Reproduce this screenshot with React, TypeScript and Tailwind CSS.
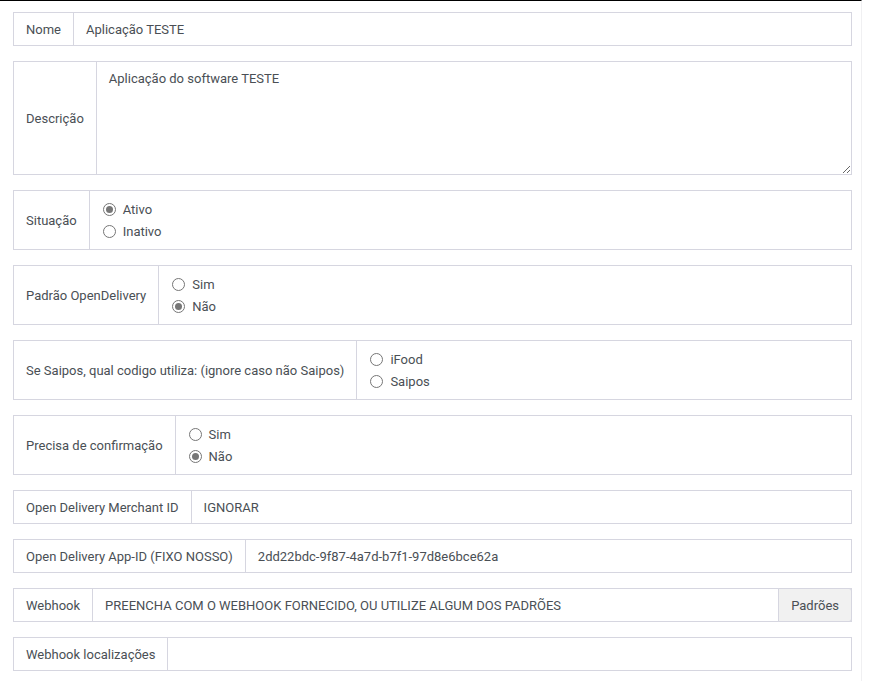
import React from "react";

const font = { fontFamily: '"Roboto", "Liberation Sans", sans-serif' };

function Radio({ checked, label }: { checked?: boolean; label: string }) {
  return (
    <label className="flex items-center gap-[7px] h-[22px]">
      <span className="w-[13px] h-[13px] rounded-full border border-[#767676] bg-white flex items-center justify-center">
        {checked && <span className="w-[7px] h-[7px] rounded-full bg-[#767676]" />}
      </span>
      <span>{label}</span>
    </label>
  );
}

function TextRow({ label, value, button }: { label: string; value?: string; button?: string }) {
  return (
    <div className="flex h-[34px] border border-[#d6d6e0] bg-white">
      <div className="flex items-center px-3 pt-px border-r border-[#d6d6e0] whitespace-nowrap">{label}</div>
      <div className="flex-1 flex items-center px-3 pt-px whitespace-nowrap overflow-hidden">{value}</div>
      {button && (
        <div className="flex items-center px-3 pt-px -my-px -mr-px h-[34px] border border-[#d6d6e0] bg-[#f1f1f1] rounded-r-[3px]">{button}</div>
      )}
    </div>
  );
}

function RadioRow({ label, options, checked }: { label: string; options: string[]; checked: number }) {
  return (
    <div className="flex h-[60px] border border-[#d6d6e0] bg-white">
      <div className="flex items-center px-3 pt-px border-r border-[#d6d6e0] whitespace-nowrap">{label}</div>
      <div className="flex-1 flex flex-col justify-center pl-[13px] pt-px">
        {options.map((o, i) => (
          <Radio key={o} label={o} checked={i === checked} />
        ))}
      </div>
    </div>
  );
}

export default function App() {
  return (
    <div style={font} className="w-[869px] h-[681px] bg-white text-[13px] text-[#4a4f55] overflow-hidden">
      <div className="w-[862px] h-full border-t border-black border-r border-r-[#f0f0f2]">
        <div className="pl-[13px] pr-[9px] pt-[11px] flex flex-col gap-[15px]">
          <TextRow label="Nome" value="Aplicação TESTE" />
          <div className="flex h-[114px] border border-[#d6d6e0] bg-white">
            <div className="flex items-center px-3 pt-px border-r border-[#d6d6e0] whitespace-nowrap">Descrição</div>
            <textarea
              className="flex-1 px-3 pt-[7px] outline-none resize-y text-[#4a4f55]"
              style={font}
              defaultValue="Aplicação do software TESTE"
            />
          </div>
          <RadioRow label="Situação" options={["Ativo", "Inativo"]} checked={0} />
          <RadioRow label="Padrão OpenDelivery" options={["Sim", "Não"]} checked={1} />
          <RadioRow label="Se Saipos, qual codigo utiliza: (ignore caso não Saipos)" options={["iFood", "Saipos"]} checked={-1} />
          <RadioRow label="Precisa de confirmação" options={["Sim", "Não"]} checked={1} />
          <TextRow label="Open Delivery Merchant ID" value="IGNORAR" />
          <TextRow label="Open Delivery App-ID (FIXO NOSSO)" value="2dd22bdc-9f87-4a7d-b7f1-97d8e6bce62a" />
          <TextRow label="Webhook" value="PREENCHA COM O WEBHOOK FORNECIDO, OU UTILIZE ALGUM DOS PADRÕES" button="Padrões" />
          <TextRow label="Webhook localizações" value="" />
        </div>
      </div>
    </div>
  );
}
